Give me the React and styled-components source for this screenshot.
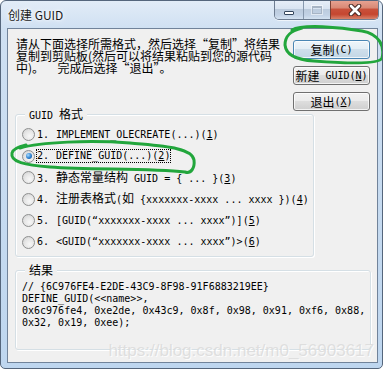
import styled, { createGlobalStyle } from "styled-components";

const GlobalStyle = createGlobalStyle`
  html, body {
    margin: 0;
    padding: 0;
    background: #fff;
  }
`;

const options = [
  { num: "1.", label: ["IMPLEMENT_OLECREATE(...)"], key: "1" },
  { num: "2.", label: ["DEFINE_GUID(...)"], key: "2", checked: true },
  { num: "3.", label: [{ cjk: "静态常量结构" }, " GUID = { ... }"], key: "3" },
  { num: "4.", label: [{ cjk: "注册表格式" }, "(", { cjk: "如" }, " {xxxxxxx-xxxx ... xxxx })"], key: "4" },
  { num: "5.", label: ["[GUID(“xxxxxxx-xxxx ... xxxx”)]"], key: "5" },
  { num: "6.", label: ["<GUID(“xxxxxxx-xxxx ... xxxx”)>"], key: "6" },
];

const resultLines = [
  "// {6C976FE4-E2DE-43C9-8F98-91F6883219EE}",
  "DEFINE_GUID(<<name>>,",
  "0x6c976fe4, 0xe2de, 0x43c9, 0x8f, 0x98, 0x91, 0xf6, 0x88,",
  "0x32, 0x19, 0xee);",
];

const introLines = [
  "请从下面选择所需格式，然后选择“复制”将结果",
  "复制到剪贴板(然后可以将结果粘贴到您的源代码",
  "中)。\u00a0\u00a0\u00a0\u00a0 完成后选择“退出”。",
];

const App = () => {
  return (
    <>
      <GlobalStyle />
      <Window>
        <TitleBar>
          <Title>创建 GUID</Title>
          <Controls>
            <CtrlButton $w={28}>
              <MinGlyph />
            </CtrlButton>
            <CtrlButton $w={27}>
              <MaxGlyph />
            </CtrlButton>
            <CtrlButton $w={48} $close>
              <svg width="16" height="12" viewBox="0 0 16 12">
                <path d="M4 2 L12 10 M12 2 L4 10" stroke="#4a2a24" strokeWidth="4.6" strokeLinecap="round" />
                <path d="M4 2 L12 10 M12 2 L4 10" stroke="#fff" strokeWidth="2.6" strokeLinecap="round" />
              </svg>
            </CtrlButton>
          </Controls>
        </TitleBar>

        <Client>
          <TopRow>
            <Intro>
              {introLines.map((l, i) => (
                <IntroLine key={i}>{l}</IntroLine>
              ))}
            </Intro>
            <ButtonColumn>
              <DialogButton $default>
                <Cjk>复制</Cjk>(C)
              </DialogButton>
              <DialogButton>
                <Cjk>新建</Cjk>&nbsp;GUID(<u>N</u>)
              </DialogButton>
              <DialogButton>
                <Cjk>退出</Cjk>(<u>X</u>)
              </DialogButton>
            </ButtonColumn>
          </TopRow>

          <GroupBox $width={299}>
            <Legend>
              GUID <Cjk>格式</Cjk>
            </Legend>
            <OptionList>
              {options.map((o) => (
                <OptionRow key={o.key}>
                  <Radio $checked={o.checked} />
                  <OptionText $focused={o.checked}>
                    <Num>{o.num}</Num>
                    {o.label.map((part, i) =>
                      typeof part === "string" ? (
                        <span key={i}>{part}</span>
                      ) : (
                        <Cjk key={i}>{part.cjk}</Cjk>
                      )
                    )}
                    (<u>{o.key}</u>)
                  </OptionText>
                </OptionRow>
              ))}
            </OptionList>
          </GroupBox>

          <GroupBox $width={356} $height={80} $gap={13}>
            <Legend>
              <Cjk>结果</Cjk>
            </Legend>
            <Code>
              {resultLines.map((l, i) => (
                <div key={i}>{l}</div>
              ))}
            </Code>
          </GroupBox>
        </Client>

        <Watermark>https://blog.csdn.net/m0_56903617</Watermark>

        <Marks width="383" height="369" viewBox="0 0 383 369">
          <path
            d="M292 30 C302 24, 340 27, 362 31 C379 34, 385 46, 382 58 C379 65, 340 63, 314 61 C298 60, 286 55, 285 45 C285 36, 290 31, 302 28"
            fill="none"
            stroke="#22a63c"
            strokeWidth="3"
            strokeLinecap="round"
          />
          <path
            d="M20 148 C40 142, 90 140, 130 143 C160 146, 192 147, 194 160 C195 168, 191 174, 185 172 C150 168, 90 170, 50 167 C25 165, 10 162, 12 153 C13 149, 17 147, 26 145"
            fill="none"
            stroke="#22a63c"
            strokeWidth="3"
            strokeLinecap="round"
          />
        </Marks>
      </Window>
    </>
  );
};

const Window = styled.div`
  position: relative;
  width: 383px;
  height: 369px;
  box-sizing: border-box;
  border: 1px solid #55667c;
  border-radius: 6px 6px 5px 5px;
  background: linear-gradient(to bottom, #e2ecf7 0px, #cfe0f2 28px, #bed6ef 100%);
  display: flex;
  flex-direction: column;
  padding: 0 4px 5px 6px;
  overflow: hidden;
  font-family: "DejaVu Sans Mono", "Liberation Mono", monospace;
  font-size: 10px;
  color: #000;
`;

const TitleBar = styled.div`
  height: 27px;
  display: flex;
  align-items: flex-start;
  justify-content: space-between;
  flex-shrink: 0;
`;

const Title = styled.div`
  margin-left: 1px;
  line-height: 27px;
  font-family: "Noto Sans CJK SC", "Noto Sans", sans-serif;
  font-size: 12px;
  color: #1b1b1b;
  text-shadow: 0 0 6px #fff, 0 0 3px #fff;
`;

const Controls = styled.div`
  display: flex;
  margin-top: -1px;
  margin-right: -1px;
  border: 1px solid #6d7c90;
  border-top: none;
  border-radius: 0 0 5px 5px;
  overflow: hidden;
  box-shadow: 0 1px 0 rgba(255, 255, 255, 0.6);
`;

const CtrlButton = styled.div`
  width: ${(p) => p.$w}px;
  height: 19px;
  box-sizing: border-box;
  display: flex;
  align-items: center;
  justify-content: center;
  border-left: ${(p) => (p.$close ? "1px solid #7a4236" : "1px solid #8798ad")};
  &:first-child {
    border-left: none;
  }
  background: ${(p) =>
    p.$close
      ? "linear-gradient(to bottom, #e8a595 0%, #d98a76 40%, #c8503a 50%, #c54630 75%, #d7826a 100%)"
      : "linear-gradient(to bottom, #e8eff8 0%, #d9e4f1 45%, #bccbdd 50%, #c2d2e5 80%, #d4e2f1 100%)"};
  box-shadow: inset 0 1px 0 rgba(255, 255, 255, 0.7);
`;

const MinGlyph = styled.span`
  width: 10px;
  height: 4px;
  box-sizing: border-box;
  margin-top: 6px;
  background: #fff;
  border: 1px solid #34465c;
  border-radius: 1px;
`;

const MaxGlyph = styled.span`
  width: 10px;
  height: 8px;
  box-sizing: border-box;
  border: 1px solid #a7b4c4;
  border-top-width: 2px;
  box-shadow: 0 0 0 1px rgba(255, 255, 255, 0.5);
`;

const Client = styled.div`
  flex: 1;
  background: #f0f0f0;
  border: 1px solid #71839a;
  padding: 9px 6px 10px 7px;
  display: flex;
  flex-direction: column;
`;

const TopRow = styled.div`
  height: 76px;
  display: flex;
  justify-content: space-between;
  flex-shrink: 0;
`;

const Intro = styled.div`
  margin: 0 0 0 1px;
  font-family: "Noto Sans CJK SC", sans-serif;
  font-size: 12px;
  white-space: nowrap;
`;

const IntroLine = styled.div`
  height: 12px;
  line-height: 12px;
`;

const ButtonColumn = styled.div`
  display: flex;
  flex-direction: column;
  gap: 7px;
  margin-top: 2px;
  margin-right: 1px;
  width: 77px;
`;

const DialogButton = styled.div`
  height: 19px;
  box-sizing: border-box;
  border: 1px solid ${(p) => (p.$default ? "#4a86b4" : "#707070")};
  border-radius: 3px;
  display: flex;
  align-items: center;
  justify-content: center;
  background: ${(p) =>
    p.$default
      ? "linear-gradient(to bottom, #eef5fa 0%, #e2edf5 50%, #cfdfeb 50%, #c3d7e6 100%)"
      : "linear-gradient(to bottom, #f2f2f2 0%, #ebebeb 50%, #dddddd 50%, #cfcfcf 100%)"};
  box-shadow: inset 0 0 0 1px rgba(255, 255, 255, 0.75);
  white-space: nowrap;
  line-height: 12px;
`;

const Cjk = styled.span`
  font-family: "Noto Sans CJK SC", sans-serif;
  font-size: 12px;
`;

const GroupBox = styled.div`
  width: ${(p) => p.$width}px;
  height: ${(p) => (p.$height ? `${p.$height}px` : "auto")};
  margin-top: ${(p) => p.$gap || 0}px;
  box-sizing: border-box;
  border: 1px solid #d5dfe5;
  border-radius: 3px;
  box-shadow: inset 1px 1px 0 #fff, 1px 1px 0 #fff;
  flex-shrink: 0;
`;

const Legend = styled.div`
  width: fit-content;
  margin: -8px 0 0 9px;
  padding: 0 4px;
  height: 14px;
  line-height: 14px;
  background: #f0f0f0;
  white-space: nowrap;
`;

const OptionList = styled.div`
  padding: 3px 0 3px 6px;
`;

const OptionRow = styled.div`
  height: 21.5px;
  display: flex;
  align-items: center;
`;

const Radio = styled.span`
  width: 13px;
  height: 13px;
  box-sizing: border-box;
  border-radius: 50%;
  border: 1px solid #8e8f8f;
  background: radial-gradient(circle at 60% 65%, #f7f7f7 0%, #e6e6e6 50%, #cdcdcd 100%);
  display: flex;
  align-items: center;
  justify-content: center;
  flex-shrink: 0;
  margin-right: 1px;

  &::after {
    content: "";
    display: ${(p) => (p.$checked ? "block" : "none")};
    width: 6px;
    height: 6px;
    border-radius: 50%;
    background: radial-gradient(circle at 35% 35%, #a8dcff 0%, #2b7fd0 55%, #1a4c86 100%);
  }
`;

const OptionText = styled.span`
  padding: 1px;
  line-height: 12px;
  white-space: nowrap;
  outline: ${(p) => (p.$focused ? "1px dotted #000" : "none")};
  outline-offset: -1px;
`;

const Num = styled.span`
  display: inline-block;
  width: 19px;
`;

const Code = styled.div`
  padding: 4px 0 0 6px;
  line-height: 12px;
  white-space: pre;
`;

const Watermark = styled.div`
  position: absolute;
  right: 8px;
  bottom: 9px;
  font-family: "Liberation Sans", Arial, sans-serif;
  font-size: 17px;
  line-height: 17px;
  color: rgba(220, 220, 220, 0.9);
  text-shadow: 1px 1px 0 rgba(255, 255, 255, 0.8);
  pointer-events: none;
`;

const Marks = styled.svg`
  position: absolute;
  left: -1px;
  top: -1px;
  pointer-events: none;
`;

export default App;
